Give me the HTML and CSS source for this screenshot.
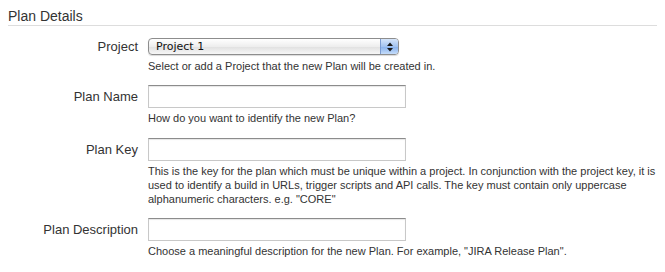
FILE: index.html
```html
<!DOCTYPE html>
<html>
	<head>
		<meta charset="UTF-8">
		<title>Plan Details</title>
		<link rel="stylesheet" href="styles.css">
	</head>
	<body>
		<form class="plan-form">
			<h2 class="section-title">Plan Details</h2>

			<div class="field-row">
				<label class="field-label select-label">Project</label>
				<div class="field">
					<div class="select-box">
						<span class="select-value">Project 1</span>
						<span class="select-arrows">
							<svg width="8" height="12" viewBox="0 0 8 12">
								<path d="M4 1.5 L7 5 L1 5 Z" fill="#1a1a1a"/>
								<path d="M4 10.5 L7 7 L1 7 Z" fill="#1a1a1a"/>
							</svg>
						</span>
					</div>
					<div class="help">Select or add a Project that the new Plan will be created in.</div>
				</div>
			</div>

			<div class="field-row">
				<label class="field-label">Plan Name</label>
				<div class="field">
					<input type="text" class="text-input">
					<div class="help">How do you want to identify the new Plan?</div>
				</div>
			</div>

			<div class="field-row">
				<label class="field-label">Plan Key</label>
				<div class="field">
					<input type="text" class="text-input">
					<div class="help">This is the key for the plan which must be unique within a project. In conjunction with the project key, it is used to identify a build in URLs, trigger scripts and API calls. The key must contain only uppercase alphanumeric characters. e.g. "CORE"</div>
				</div>
			</div>

			<div class="field-row">
				<label class="field-label">Plan Description</label>
				<div class="field">
					<input type="text" class="text-input">
					<div class="help">Choose a meaningful description for the new Plan. For example, "JIRA Release Plan".</div>
				</div>
			</div>
		</form>
	</body>
</html>
```

FILE: styles.css
```css
*{
	margin:0; padding:0;
	box-sizing: border-box;
}

body{
	margin:8px;
	font-family: "Liberation Sans", Arial, sans-serif;
	color:#333;
	background:#fff;
}

.section-title{
	font-size:14px;
	font-weight: normal;
	line-height:17px;
	color:#333;
	border-bottom:1px solid #ddd;
	margin-bottom:12px;
}

.field-row{
	display: grid;
	grid-template-columns: 130px 1fr;
	column-gap:10px;
	margin-bottom:12px;
}

.field-label{
	font-size:13px;
	text-align: right;
	line-height:18px;
	padding-top:3px;
	color:#333;
}

.select-label{
	padding-top:0;
}

.help{
	font-size:11px;
	line-height:14.3px;
	color:#333;
	margin-top:3px;
}

.select-box + .help{
	margin-top:4px;
}

.text-input{
	display: block;
	width:258px;
	height:23px;
	border:1px solid #c8c8c8;
	border-top-color:#8c8c8c;
	box-shadow: inset 0 1px 1px #e6e6e6;
	background:#fff;
}

.select-box{
	display: flex;
	width:251px;
	height:17px;
	border:1px solid #8d8d8d;
	border-radius:4px;
	background:linear-gradient(#ffffff, #eeeeee 50%, #e0e0e0 51%, #f6f6f6);
	overflow: hidden;
	box-shadow: 0 1px 1px rgba(0,0,0,0.15);
}

.select-value{
	flex-grow: 1;
	font-family: "DejaVu Sans", sans-serif;
	font-size:11px;
	line-height:15px;
	padding-left:7px;
	color:#111;
}

.select-arrows{
	width:18px;
	display: flex;
	align-items: center;
	justify-content: center;
	border-left:1px solid #7b9bd0;
	background:linear-gradient(#d6e5fa, #a3c3f0 50%, #86b0ec 51%, #c4dcfa);
}
```
